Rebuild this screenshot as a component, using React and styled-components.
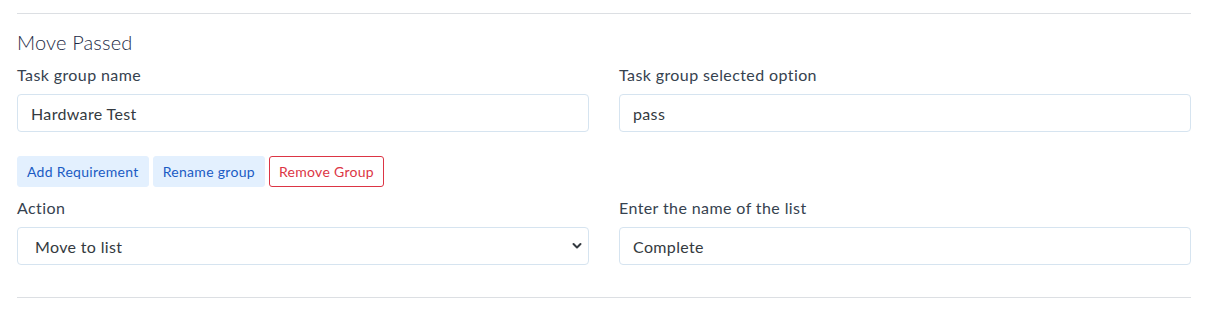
import React from "react";
import styled, { createGlobalStyle } from "styled-components";

const Global = createGlobalStyle`
  body { margin: 0; background: #fff; font-family: Lato, "Noto Sans", sans-serif; }
  * { box-sizing: border-box; }
`;

const Page = styled.div`
  padding: 0 18px 0 17px;
`;

const Rule = styled.hr`
  border: 0;
  border-top: 1px solid #dcdfe3;
  margin: ${(p) => p.$top}px 0 0;
`;

const Title = styled.h5`
  margin: 16px 0 0;
  font-size: 20px;
  line-height: 24px;
  font-weight: 300;
  letter-spacing: 0.15px;
  color: #1c2945;
`;

const Row = styled.div`
  display: grid;
  grid-template-columns: 1fr 1fr;
  column-gap: 30px;
  margin-top: ${(p) => p.$top || 0}px;
`;

const Field = styled.div`
  display: flex;
  flex-direction: column;
`;

const Label = styled.label`
  font-size: 16px;
  line-height: 24px;
  letter-spacing: 0.4px;
  color: #36424f;
  margin-bottom: 7px;
`;

const Input = styled.input`
  height: 38px;
  border: 1px solid #d6e4f0;
  border-radius: 4px;
  padding: 0 13px;
  font-family: inherit;
  font-size: 16px;
  letter-spacing: 0.35px;
  color: #343a40;
  background: #fff;
  outline: none;
`;

const SelectBox = styled.div`
  position: relative;
  height: 38px;
  border: 1px solid #d6e4f0;
  border-radius: 4px;
  padding: 0 17px;
  display: flex;
  align-items: center;
  font-size: 16px;
  letter-spacing: 0.35px;
  color: #343a40;
`;

const Chevron = styled.svg`
  position: absolute;
  right: 6px;
  top: 14px;
`;

const Buttons = styled.div`
  display: flex;
  gap: 4px;
  margin-top: 24px;
`;

const Btn = styled.button`
  height: 31px;
  padding: 0 9px;
  border-radius: 3px;
  font-family: inherit;
  font-size: 14px;
  letter-spacing: 0.3px;
  cursor: pointer;
  background: ${(p) => (p.$danger ? "#fff" : "#e3f0fe")};
  border: 1px solid ${(p) => (p.$danger ? "#dc3545" : "#e3f0fe")};
  color: ${(p) => (p.$danger ? "#dc3545" : "#1a5bc4")};
`;

export default function App() {
  return (
    <>
      <Global />
      <Page>
        <Rule $top={13} />
        <Title>Move Passed</Title>
        <Row $top={9}>
          <Field>
            <Label>Task group name</Label>
            <Input defaultValue="Hardware Test" />
          </Field>
          <Field>
            <Label>Task group selected option</Label>
            <Input defaultValue="pass" />
          </Field>
        </Row>
        <Buttons>
          <Btn>Add Requirement</Btn>
          <Btn>Rename group</Btn>
          <Btn $danger>Remove Group</Btn>
        </Buttons>
        <Row $top={9}>
          <Field>
            <Label>Action</Label>
            <SelectBox>
              Move to list
              <Chevron width="10" height="8" viewBox="0 0 10 8">
                <path d="M1.5 2 L5 5.5 L8.5 2" fill="none" stroke="#343a40" strokeWidth="2" strokeLinecap="round" strokeLinejoin="round" />
              </Chevron>
            </SelectBox>
          </Field>
          <Field>
            <Label>Enter the name of the list</Label>
            <Input defaultValue="Complete" />
          </Field>
        </Row>
        <Rule $top={32} />
      </Page>
    </>
  );
}
